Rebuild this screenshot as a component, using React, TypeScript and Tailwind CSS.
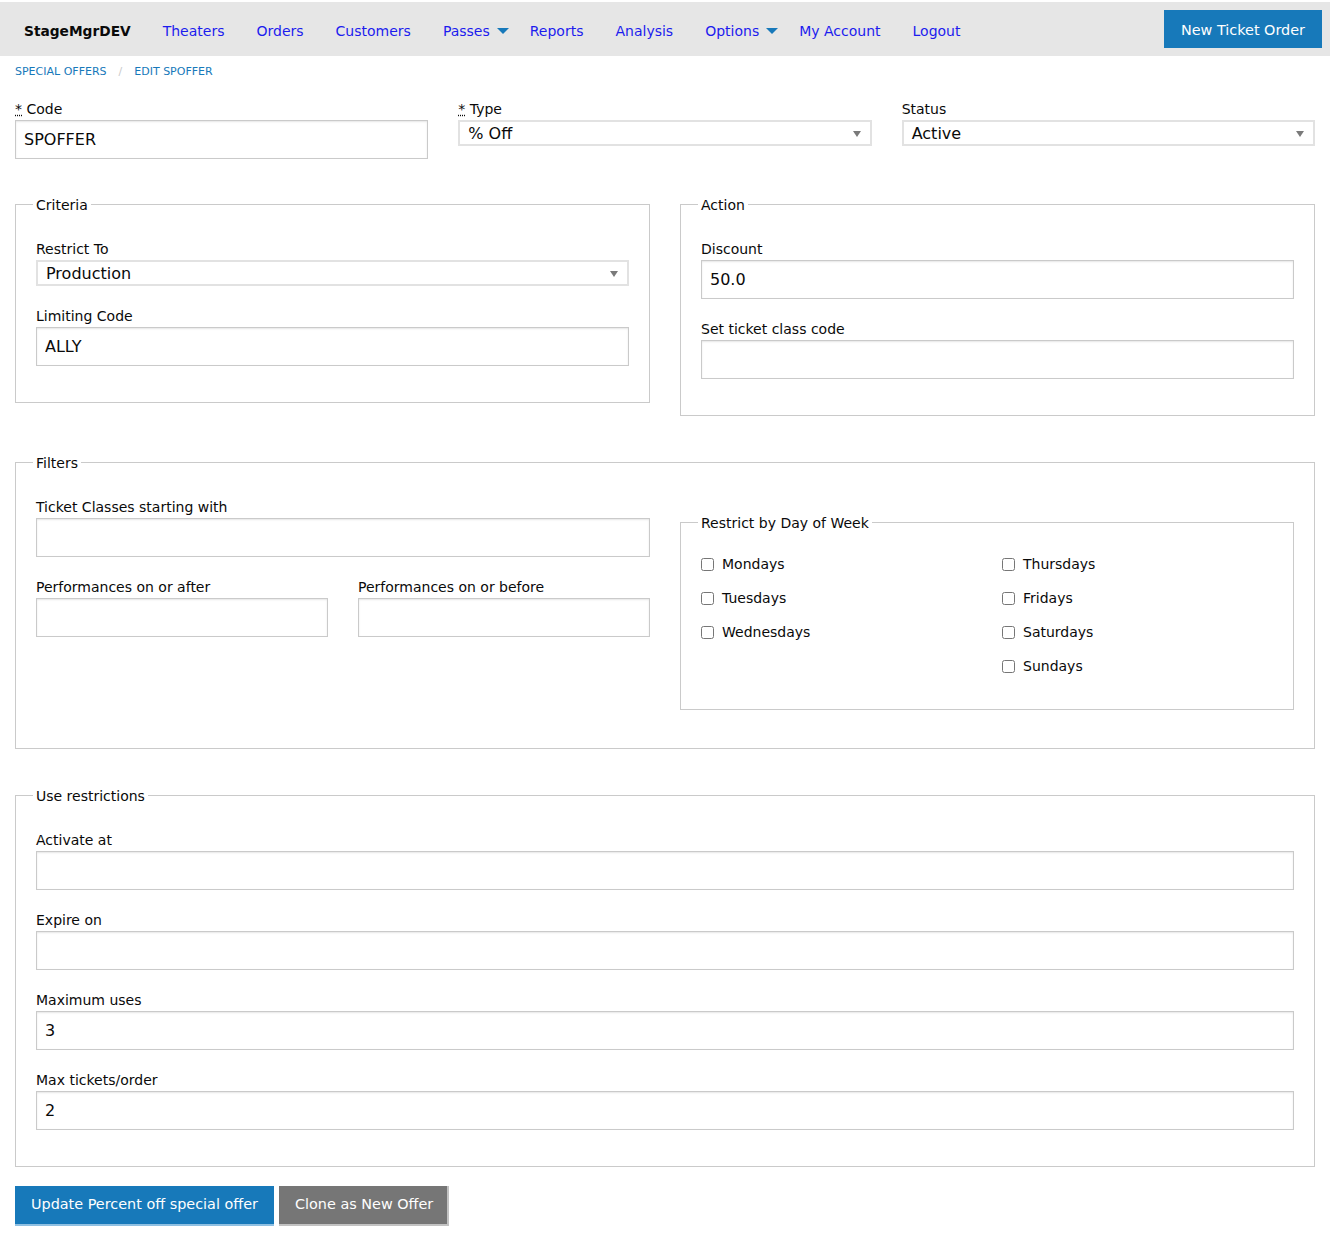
import React from "react";

const font = { fontFamily: '"DejaVu Sans", Verdana, sans-serif' };

function Label({ children }: { children: React.ReactNode }) {
  return <div className="h-[25px] pt-[3px] text-[14px] leading-[22px] text-[#0a0a0a]">{children}</div>;
}

function Req() {
  return (
    <abbr title="required" className="underline decoration-dotted">
      *
    </abbr>
  );
}

function TextInput({ value = "" }: { value?: string }) {
  return (
    <input
      readOnly
      value={value}
      className="mb-[16px] block h-[39px] w-full border border-[#cacaca] bg-white px-[8px] text-[16px] text-[#0a0a0a] shadow-[inset_0_1px_2px_rgba(10,10,10,0.1)] outline-none"
      style={font}
    />
  );
}

function Select({ value }: { value: string }) {
  return (
    <div className="mb-[16px] flex h-[26px] w-full items-center justify-between border-2 border-[#e2e2e2] bg-white pl-[8px] pr-[8px] pt-[1px] text-[16px] text-[#0a0a0a]">
      <span>{value}</span>
      <svg width="8" height="6" viewBox="0 0 8 6" className="mr-[1px]">
        <path d="M0 0 L8 0 L4 6 Z" fill="#7a7a7a" />
      </svg>
    </div>
  );
}

function Fieldset({
  legend,
  children,
  className = "",
}: {
  legend: string;
  children: React.ReactNode;
  className?: string;
}) {
  return (
    <fieldset className={`border border-[#cacaca] px-[20px] pb-[20px] pt-[20px] ${className}`}>
      <legend className="ml-[-3px] px-[3px] pt-[2px] text-[14px] leading-[20px] text-[#0a0a0a]">{legend}</legend>
      {children}
    </fieldset>
  );
}

function NavLink({ children, dropdown }: { children: React.ReactNode; dropdown?: boolean }) {
  return (
    <a className={`flex items-center pl-[16px] ${dropdown ? "pr-[5px]" : "pr-[16px]"} text-[14px] text-[#1c1cee]`}>
      <span>{children}</span>
      {dropdown && (
        <svg width="12" height="6" viewBox="0 0 12 6" className="ml-[7px]">
          <path d="M0 0 L12 0 L6 6 Z" fill="#1779ba" />
        </svg>
      )}
    </a>
  );
}

function Check({ label }: { label: string }) {
  return (
    <label className="mb-[11px] flex h-[23px] items-center text-[14px] text-[#0a0a0a]">
      <input type="checkbox" className="m-0 h-[13px] w-[13px]" />
      <span className="ml-[8px]">{label}</span>
    </label>
  );
}

export default function App() {
  return (
    <div className="min-h-[1242px] bg-white" style={font}>
      {/* Top bar */}
      <div className="mt-[2px] flex h-[54px] items-center justify-between bg-[#e6e6e6] pl-[8px] pr-[8px]">
        <div className="flex items-center pt-[4px]">
          <span className="pl-[16px] pr-[16px] text-[13.75px] font-bold text-[#0a0a0a]">StageMgrDEV</span>
          <NavLink>Theaters</NavLink>
          <NavLink>Orders</NavLink>
          <NavLink>Customers</NavLink>
          <NavLink dropdown>Passes</NavLink>
          <NavLink>Reports</NavLink>
          <NavLink>Analysis</NavLink>
          <NavLink dropdown>Options</NavLink>
          <NavLink>My Account</NavLink>
          <NavLink>Logout</NavLink>
        </div>
        <button className="h-[38px] bg-[#1779ba] px-[17px] pt-[3px] text-[14.4px] text-[#fefefe]">New Ticket Order</button>
      </div>

      <div className="px-[15px]">
        {/* Breadcrumbs */}
        <div className="mb-[16px] mt-[9px] flex h-[14px] items-center text-[11px] uppercase leading-[14px] text-[#1779ba]">
          <span>Special Offers</span>
          <span className="mx-[12px] text-[#cacaca]">/</span>
          <span>Edit SPOFFER</span>
        </div>

        {/* Top row */}
        <div className="grid grid-cols-3 items-start gap-x-[30px]">
          <div>
            <Label>
              <Req /> Code
            </Label>
            <TextInput value="SPOFFER" />
          </div>
          <div>
            <Label>
              <Req /> Type
            </Label>
            <Select value="% Off" />
          </div>
          <div>
            <Label>Status</Label>
            <Select value="Active" />
          </div>
        </div>

        {/* Criteria / Action */}
        <div className="grid grid-cols-2 items-start gap-x-[30px]">
          <Fieldset legend="Criteria" className="my-[18px]">
            <Label>Restrict To</Label>
            <Select value="Production" />
            <Label>Limiting Code</Label>
            <TextInput value="ALLY" />
          </Fieldset>
          <Fieldset legend="Action" className="my-[18px]">
            <Label>Discount</Label>
            <TextInput value="50.0" />
            <Label>Set ticket class code</Label>
            <TextInput />
          </Fieldset>
        </div>

        {/* Filters */}
        <Fieldset legend="Filters" className="mb-[18px] mt-[17px]">
          <div className="grid grid-cols-2 items-start gap-x-[30px]">
            <div>
              <Label>Ticket Classes starting with</Label>
              <TextInput />
              <div className="grid grid-cols-2 gap-x-[30px]">
                <div>
                  <Label>Performances on or after</Label>
                  <TextInput />
                </div>
                <div>
                  <Label>Performances on or before</Label>
                  <TextInput />
                </div>
              </div>
            </div>
            <Fieldset legend="Restrict by Day of Week" className="my-[18px]">
              <div className="grid grid-cols-2 gap-x-[30px]">
                <div>
                  <Check label="Mondays" />
                  <Check label="Tuesdays" />
                  <Check label="Wednesdays" />
                </div>
                <div>
                  <Check label="Thursdays" />
                  <Check label="Fridays" />
                  <Check label="Saturdays" />
                  <Check label="Sundays" />
                </div>
              </div>
            </Fieldset>
          </div>
        </Fieldset>

        {/* Use restrictions */}
        <Fieldset legend="Use restrictions" className="mb-[19px] mt-[35px]">
          <Label>Activate at</Label>
          <TextInput />
          <Label>Expire on</Label>
          <TextInput />
          <Label>Maximum uses</Label>
          <TextInput value="3" />
          <Label>Max tickets/order</Label>
          <TextInput value="2" />
        </Fieldset>

        {/* Buttons */}
        <div className="flex items-start gap-[5px]">
          <button className="h-[40px] border-b-2 border-[#8fc0e2] bg-[#1779ba] px-[16px] text-[14.4px] text-[#fefefe]">
            Update Percent off special offer
          </button>
          <button className="h-[40px] border-b-2 border-r-2 border-[#c2c2c2] bg-[#767676] pl-[16px] pr-[14px] text-[14.4px] text-[#fefefe]">
            Clone as New Offer
          </button>
        </div>
      </div>
    </div>
  );
}
